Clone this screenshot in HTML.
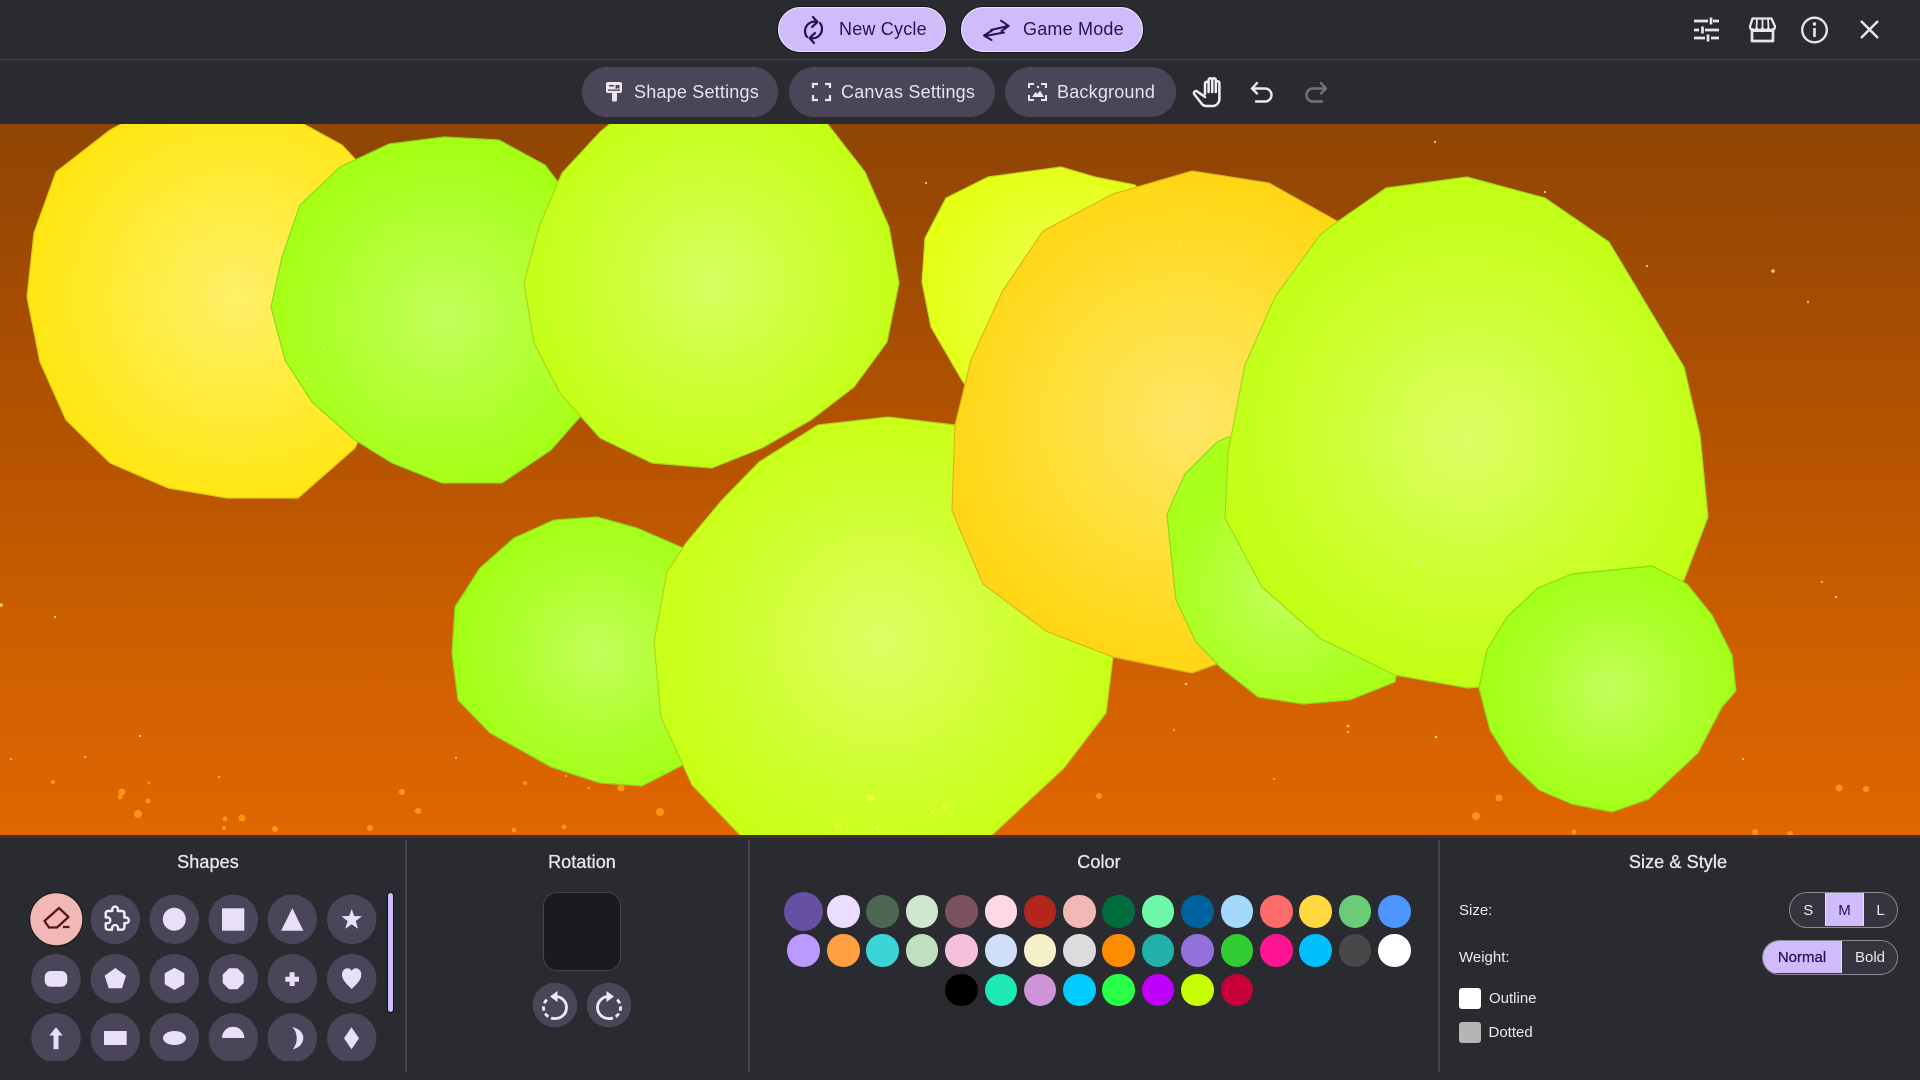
<!DOCTYPE html>
<html><head><meta charset="utf-8">
<style>
html,body{margin:0;padding:0;width:1920px;height:1080px;overflow:hidden;background:#2a2a31;font-family:"Liberation Sans",sans-serif;color:#e6e0e9}
.a{position:absolute}
.btn{position:absolute;box-sizing:border-box;border-radius:26px;font-size:18px;letter-spacing:.2px;white-space:nowrap}
.p{background:#d0bcfb;border:1.5px solid #ece4ff;box-shadow:0 0 0 1px #17161c;color:#25125e;top:7px;height:45px;line-height:43px}
.s{background:#4a4558;color:#e8e2ee;top:67px;height:50px;line-height:50px}
.t{position:absolute;font-size:18px;top:851px;height:22px;line-height:22px;text-align:center;color:#e8e4ec;transform:translateX(-50%);white-space:nowrap;letter-spacing:.1px;-webkit-text-stroke:.35px #e8e4ec}
.l{position:absolute;font-size:15px;line-height:18px;color:#ece8ef;white-space:nowrap}
.seg{position:absolute;box-sizing:border-box;font-size:15px;text-align:center;background:#36353d;color:#ece8ef}
svg{position:absolute;left:0;top:0;overflow:hidden}
</style></head>
<body>
<div class="a" style="left:0;top:59px;width:1920px;height:1px;background:#45444c"></div>

<div class="btn p" style="left:778px;width:168px;"><span class="a" style="left:60px">New Cycle</span></div>
<div class="btn p" style="left:961px;width:182px;"><span class="a" style="left:61px">Game Mode</span></div>

<div class="btn s" style="left:582px;width:196px;"><span class="a" style="left:52px">Shape Settings</span></div>
<div class="btn s" style="left:789px;width:206px;"><span class="a" style="left:52px">Canvas Settings</span></div>
<div class="btn s" style="left:1005px;width:171px;"><span class="a" style="left:52px">Background</span></div>

<div class="a" style="left:0;top:124px;width:1920px;height:711px;background:linear-gradient(180deg,#8f4504 0%,#a04b03 20%,#b95500 50%,#d06000 75%,#e06600 100%)"></div>
<svg class="a" style="left:0;top:124px" width="1920" height="711" viewBox="0 124 1920 711">
<defs>
<radialGradient id="y1" gradientUnits="userSpaceOnUse" cx="236" cy="297" r="210"><stop offset="0" stop-color="#fff068"/><stop offset=".55" stop-color="#ffeb38"/><stop offset="1" stop-color="#ffe612"/></radialGradient>
<radialGradient id="g1" gradientUnits="userSpaceOnUse" cx="444" cy="317" r="175"><stop offset="0" stop-color="#c2ff5c"/><stop offset=".55" stop-color="#b2ff33"/><stop offset="1" stop-color="#a5ff14"/></radialGradient>
<radialGradient id="l1" gradientUnits="userSpaceOnUse" cx="713" cy="283" r="195"><stop offset="0" stop-color="#d8ff62"/><stop offset=".55" stop-color="#ccff33"/><stop offset="1" stop-color="#c4ff14"/></radialGradient>
<radialGradient id="g2" gradientUnits="userSpaceOnUse" cx="597" cy="653" r="145"><stop offset="0" stop-color="#c2ff5c"/><stop offset=".6" stop-color="#aeff2c"/><stop offset="1" stop-color="#a2ff14"/></radialGradient>
<radialGradient id="l2" gradientUnits="userSpaceOnUse" cx="882" cy="640" r="235"><stop offset="0" stop-color="#deff66"/><stop offset=".55" stop-color="#d0ff33"/><stop offset="1" stop-color="#c8ff14"/></radialGradient>
<radialGradient id="l3" gradientUnits="userSpaceOnUse" cx="1061" cy="300" r="140"><stop offset="0" stop-color="#ecff55"/><stop offset="1" stop-color="#e4ff14"/></radialGradient>
<radialGradient id="y2" gradientUnits="userSpaceOnUse" cx="1187" cy="420" r="240"><stop offset="0" stop-color="#ffe668"/><stop offset=".55" stop-color="#ffdf38"/><stop offset="1" stop-color="#ffd716"/></radialGradient>
<radialGradient id="g3" gradientUnits="userSpaceOnUse" cx="1285" cy="590" r="120"><stop offset="0" stop-color="#c2ff5c"/><stop offset="1" stop-color="#a8ff18"/></radialGradient>
<radialGradient id="l4" gradientUnits="userSpaceOnUse" cx="1468" cy="437" r="250"><stop offset="0" stop-color="#dcff66"/><stop offset=".55" stop-color="#ceff33"/><stop offset="1" stop-color="#c2ff14"/></radialGradient>
<radialGradient id="g4" gradientUnits="userSpaceOnUse" cx="1612" cy="690" r="130"><stop offset="0" stop-color="#c2ff5c"/><stop offset=".6" stop-color="#aeff2c"/><stop offset="1" stop-color="#a2ff14"/></radialGradient>
</defs>
<g stroke-width="1.2" stroke-linejoin="round">
<polygon fill="url(#y1)" stroke="#e0ca10" points="125,122 300,122 342,145 358,162 420,300 355,448 298,498 227,498 168,488 110,463 66,420 40,362 27,297 34,233 56,172 110,130"/>
<polygon fill="url(#g1)" stroke="#8ed81a" points="444,137 499,140 545,165 558,182 600,290 580,417 551,450 502,483 442,483 392,463 355,440 312,402 285,360 271,307 282,257 300,205 340,167 389,144"/>
<polygon fill="url(#l1)" stroke="#a6d81a" points="612,122 826,122 865,172 889,227 899,283 887,342 854,387 811,420 762,448 712,468 652,463 600,438 560,393 534,343 524,283 539,227 562,173 600,132"/>
<polygon fill="url(#g2)" stroke="#8fd81a" points="554,520 597,517 637,528 683,548 720,650 683,765 642,786 600,783 551,767 490,733 458,700 452,653 455,607 480,568 514,538"/>
<polygon fill="url(#l2)" stroke="#aed81a" points="888,417 955,425 1060,480 1113,657 1106,713 1064,768 991,836 741,836 692,785 661,717 654,642 667,572 686,543 722,500 759,462 818,425"/>
<polygon fill="url(#l3)" stroke="#c2d81a" points="1061,167 1095,177 1135,185 1200,250 1200,400 1000,440 960,377 931,327 922,282 925,238 946,198 960,191 988,177"/>
<polygon fill="url(#y2)" stroke="#d8b81a" points="1192,171 1269,183 1337,221 1420,300 1450,500 1300,660 1217,664 1192,673 1113,657 1046,631 983,584 960,530 952,510 955,425 960,405 971,360 1002,292 1043,231 1113,194"/>
<polygon fill="url(#g3)" stroke="#8ed81a" points="1228,437 1217,442 1185,474 1173,500 1167,515 1176,600 1196,642 1220,667 1258,697 1303,704 1350,700 1395,682 1410,600 1350,480"/>
<polygon fill="url(#l4)" stroke="#a0d81a" points="1467,177 1386,188 1337,222 1320,235 1275,297 1245,365 1228,453 1225,518 1262,587 1321,639 1395,675 1468,688 1481,687 1600,650 1684,580 1708,517 1700,435 1684,367 1609,242 1545,198"/>
<polygon fill="url(#g4)" stroke="#8ed81a" points="1652,566 1572,574 1538,588 1507,617 1487,650 1479,688 1490,730 1510,762 1539,790 1572,804 1612,812 1649,799 1698,753 1722,707 1736,691 1732,655 1712,615 1687,584"/>
</g>
<g fill="#ff9416">
<circle cx="122" cy="792" r="3.5"/><circle cx="120" cy="797" r="2.5"/><circle cx="138" cy="814" r="4"/><circle cx="148" cy="801" r="2.5"/><circle cx="225" cy="819" r="2.5"/><circle cx="242" cy="818" r="3.5"/><circle cx="224" cy="828" r="2"/><circle cx="275" cy="829" r="3"/><circle cx="370" cy="828" r="3"/><circle cx="402" cy="792" r="3"/><circle cx="418" cy="811" r="3"/><circle cx="514" cy="830" r="2.5"/><circle cx="564" cy="827" r="2.5"/><circle cx="621" cy="788" r="3.5"/><circle cx="660" cy="812" r="4"/><circle cx="525" cy="783" r="2"/><circle cx="53" cy="782" r="2"/><circle cx="149" cy="783" r="1.5"/><circle cx="1099" cy="796" r="3"/><circle cx="1499" cy="798" r="3.5"/><circle cx="1476" cy="816" r="4"/><circle cx="1839" cy="788" r="3.5"/><circle cx="1866" cy="789" r="3"/><circle cx="1574" cy="832" r="2.5"/><circle cx="1755" cy="832" r="3"/><circle cx="1790" cy="834" r="3"/>
</g>
<g fill="#eeff3a">
<circle cx="870" cy="798" r="4"/><circle cx="838" cy="826" r="3"/><circle cx="945" cy="807" r="2.5"/><circle cx="933" cy="812" r="2.5"/><circle cx="877" cy="828" r="2"/>
</g>
<g fill="#ffdf9a" opacity=".85">
<circle cx="1" cy="605" r="1.8"/><circle cx="55" cy="617" r="1.1"/><circle cx="140" cy="736" r="1.1"/><circle cx="11" cy="759" r="1"/><circle cx="85" cy="757" r="1"/><circle cx="219" cy="777" r="1"/><circle cx="456" cy="758" r="1"/><circle cx="566" cy="776" r=".9"/><circle cx="589" cy="788" r=".9"/><circle cx="1186" cy="684" r="1.3"/><circle cx="1348" cy="726" r="1.3"/><circle cx="1348" cy="732" r="1.1"/><circle cx="1436" cy="737" r="1.3"/><circle cx="1174" cy="730" r=".9"/><circle cx="1743" cy="759" r="1.1"/><circle cx="1836" cy="597" r="1.1"/><circle cx="1822" cy="582" r="1"/><circle cx="1422" cy="560" r="1.3"/><circle cx="1709" cy="721" r="1.1"/><circle cx="1706" cy="714" r=".9"/><circle cx="1274" cy="779" r=".9"/><circle cx="1435" cy="142" r="1.1"/><circle cx="1545" cy="192" r="1.1"/><circle cx="1647" cy="266" r="1.1"/><circle cx="1773" cy="271" r="1.8"/><circle cx="1808" cy="302" r="1.1"/><circle cx="1583" cy="416" r="1.3"/><circle cx="1180" cy="246" r="1.1"/><circle cx="1106" cy="429" r="1.3"/><circle cx="1380" cy="202" r="1.1"/><circle cx="1420" cy="490" r=".9"/><circle cx="926" cy="183" r="1.1"/><circle cx="307" cy="378" r="1.6"/><circle cx="187" cy="196" r=".9"/><circle cx="127" cy="236" r=".9"/><circle cx="369" cy="307" r=".9"/><circle cx="324" cy="348" r="1"/><circle cx="594" cy="193" r=".9"/>
</g>
</svg>
<div class="a" style="left:0;top:835px;width:1920px;height:3px;background:#463228"></div>

<div class="a" style="left:405px;top:840px;width:1.5px;height:232px;background:#45434f"></div>
<div class="a" style="left:748px;top:840px;width:1.5px;height:232px;background:#45434f"></div>
<div class="a" style="left:1438px;top:840px;width:1.5px;height:232px;background:#45434f"></div>

<div class="t" style="left:208px">Shapes</div>
<div class="t" style="left:582px">Rotation</div>
<div class="t" style="left:1099px">Color</div>
<div class="t" style="left:1678px">Size &amp; Style</div>

<div class="a" style="left:543px;top:892px;width:76px;height:77px;background:#1c1a20;border:1.5px solid #45434f;border-radius:14px"></div>

<div class="a" style="left:387px;top:892px;width:7px;height:121px;background:#d0bcfb;border:1.5px solid #111016;box-sizing:border-box;border-radius:4px"></div>

<div id="colors">
<div class="a" style="left:784px;top:891.5px;width:39px;height:39px;border-radius:50%;background:#6750a4"></div>
<div class="a" style="left:827px;top:895px;width:32.5px;height:32.5px;border-radius:50%;background:#eaddff"></div>
<div class="a" style="left:866px;top:895px;width:32.5px;height:32.5px;border-radius:50%;background:#4f6650"></div>
<div class="a" style="left:905.5px;top:895px;width:32.5px;height:32.5px;border-radius:50%;background:#cfe6cf"></div>
<div class="a" style="left:945px;top:895px;width:32.5px;height:32.5px;border-radius:50%;background:#7d5260"></div>
<div class="a" style="left:984.5px;top:895px;width:32.5px;height:32.5px;border-radius:50%;background:#ffd8e4"></div>
<div class="a" style="left:1023.5px;top:895px;width:32.5px;height:32.5px;border-radius:50%;background:#b3261e"></div>
<div class="a" style="left:1063px;top:895px;width:32.5px;height:32.5px;border-radius:50%;background:#f2b8b5"></div>
<div class="a" style="left:1102px;top:895px;width:32.5px;height:32.5px;border-radius:50%;background:#006d3e"></div>
<div class="a" style="left:1141.5px;top:895px;width:32.5px;height:32.5px;border-radius:50%;background:#6ff7a9"></div>
<div class="a" style="left:1181px;top:895px;width:32.5px;height:32.5px;border-radius:50%;background:#00629d"></div>
<div class="a" style="left:1220.5px;top:895px;width:32.5px;height:32.5px;border-radius:50%;background:#a4d8ff"></div>
<div class="a" style="left:1260px;top:895px;width:32.5px;height:32.5px;border-radius:50%;background:#ff6b6b"></div>
<div class="a" style="left:1299px;top:895px;width:32.5px;height:32.5px;border-radius:50%;background:#ffd93d"></div>
<div class="a" style="left:1338.5px;top:895px;width:32.5px;height:32.5px;border-radius:50%;background:#6bcb77"></div>
<div class="a" style="left:1378px;top:895px;width:32.5px;height:32.5px;border-radius:50%;background:#4d96ff"></div>

<div class="a" style="left:787px;top:934px;width:32.5px;height:32.5px;border-radius:50%;background:#ba9aff"></div>
<div class="a" style="left:827px;top:934px;width:32.5px;height:32.5px;border-radius:50%;background:#ff9f40"></div>
<div class="a" style="left:866px;top:934px;width:32.5px;height:32.5px;border-radius:50%;background:#3bd5d8"></div>
<div class="a" style="left:905.5px;top:934px;width:32.5px;height:32.5px;border-radius:50%;background:#bfdfc0"></div>
<div class="a" style="left:945px;top:934px;width:32.5px;height:32.5px;border-radius:50%;background:#f4c0dd"></div>
<div class="a" style="left:984.5px;top:934px;width:32.5px;height:32.5px;border-radius:50%;background:#cfdffb"></div>
<div class="a" style="left:1023.5px;top:934px;width:32.5px;height:32.5px;border-radius:50%;background:#f6f0c8"></div>
<div class="a" style="left:1063px;top:934px;width:32.5px;height:32.5px;border-radius:50%;background:#dcdcdc"></div>
<div class="a" style="left:1102px;top:934px;width:32.5px;height:32.5px;border-radius:50%;background:#ff8c00"></div>
<div class="a" style="left:1141.5px;top:934px;width:32.5px;height:32.5px;border-radius:50%;background:#20b2aa"></div>
<div class="a" style="left:1181px;top:934px;width:32.5px;height:32.5px;border-radius:50%;background:#9370db"></div>
<div class="a" style="left:1220.5px;top:934px;width:32.5px;height:32.5px;border-radius:50%;background:#32cd32"></div>
<div class="a" style="left:1260px;top:934px;width:32.5px;height:32.5px;border-radius:50%;background:#ff1493"></div>
<div class="a" style="left:1299px;top:934px;width:32.5px;height:32.5px;border-radius:50%;background:#00bfff"></div>
<div class="a" style="left:1338.5px;top:934px;width:32.5px;height:32.5px;border-radius:50%;background:#484848"></div>
<div class="a" style="left:1378px;top:934px;width:32.5px;height:32.5px;border-radius:50%;background:#ffffff"></div>

<div class="a" style="left:945px;top:973.5px;width:32.5px;height:32.5px;border-radius:50%;background:#000000"></div>
<div class="a" style="left:984.5px;top:973.5px;width:32.5px;height:32.5px;border-radius:50%;background:#1de9b6"></div>
<div class="a" style="left:1023.5px;top:973.5px;width:32.5px;height:32.5px;border-radius:50%;background:#ce93d8"></div>
<div class="a" style="left:1063px;top:973.5px;width:32.5px;height:32.5px;border-radius:50%;background:#00ccff"></div>
<div class="a" style="left:1102px;top:973.5px;width:32.5px;height:32.5px;border-radius:50%;background:#29ff46"></div>
<div class="a" style="left:1141.5px;top:973.5px;width:32.5px;height:32.5px;border-radius:50%;background:#bf00ff"></div>
<div class="a" style="left:1181px;top:973.5px;width:32.5px;height:32.5px;border-radius:50%;background:#c6ff00"></div>
<div class="a" style="left:1220.5px;top:973.5px;width:32.5px;height:32.5px;border-radius:50%;background:#c70039"></div>
</div>

<div class="l" style="left:1459px;top:902px">Size:</div>
<div class="l" style="left:1459px;top:949px">Weight:</div>
<div class="l" style="left:1489px;top:990px">Outline</div>
<div class="l" style="left:1488.5px;top:1024px">Dotted</div>
<div class="a" style="left:1459px;top:988px;width:22px;height:21px;background:#fff;border-radius:3px"></div>
<div class="a" style="left:1459px;top:1022px;width:22px;height:21px;background:#b5b5b5;border-radius:3px"></div>

<div class="a" style="left:1789px;top:892px;width:109px;height:36px;box-sizing:border-box;border:1.5px solid #8c8a94;border-radius:18px;overflow:hidden;background:#36353d">
<div class="seg" style="left:1px;top:0;width:34.5px;height:33px;line-height:35px">S</div>
<div class="seg" style="left:35px;top:0;width:39px;height:33px;line-height:35px;background:#d0bcfb;color:#25125e;border-left:1px solid #e6e0f0;border-right:1px solid #e6e0f0">M</div>
<div class="seg" style="left:74px;top:0;width:33px;height:33px;line-height:35px">L</div>
</div>
<div class="a" style="left:1762px;top:940px;width:136px;height:35px;box-sizing:border-box;border:1.5px solid #8c8a94;border-radius:18px;overflow:hidden;background:#36353d">
<div class="seg" style="left:0;top:0;width:79px;height:32px;line-height:34px;background:#d0bcfb;color:#25125e;border-right:1px solid #e6e0f0;-webkit-text-stroke:.25px #25125e">Normal</div>
<div class="seg" style="left:80px;top:0;width:54px;height:32px;line-height:34px">Bold</div>
</div>

<svg width="1920" height="1080" viewBox="0 0 1920 1080" fill="none">
<defs><clipPath id="cl"><rect x="0" y="880" width="385" height="181"/></clipPath></defs>
<!-- header -->
<g stroke="#25125e" stroke-width="2.2" stroke-linecap="round" stroke-linejoin="round">
<path d="M817 22A9.500 9.500 0 0 0 807 37M813 17L817.500 22L812 27"/>
<path d="M810 38A9.500 9.500 0 0 0 820 23M815 33L809.500 38L814 43"/>
<path stroke-width="2" d="M991 30L1008 26M1001 20.700L1008.700 26L1001.500 31"/>
<path stroke-width="2" d="M1004 32.500L985 36M992 30.500L984 35.500L991.500 40"/>
</g>
<!-- toolbar btn icons -->
<path fill="#ece6f0" d="M606 84a2 2 0 0 1 2-2h12a2 2 0 0 1 2 2v7a2 2 0 0 1-2 2h-3v7a1.500 1.500 0 0 1-1.500 1.500h-2a1.500 1.500 0 0 1-1.500-1.500v-7h-4a2 2 0 0 1-2-2z"/>
<rect x="609" y="85" width="5" height="1.500" fill="#4a4558"/><rect x="615.500" y="85" width="4" height="3.500" fill="#4a4558"/><rect x="608" y="89.500" width="12" height="1.300" fill="#4a4558"/>
<path stroke="#ece6f0" stroke-width="2.200" d="M813 88V84H818M825 84H830V88M830 95V100H825M818 100H813V95"/>
<path stroke="#ece6f0" stroke-width="2" d="M1029 88V84H1034M1041 84H1046V88M1046 95V100H1041M1034 100H1029V95"/>
<path fill="#ece6f0" d="M1032 97L1035.500 92L1037.500 94L1040 90.500L1044 97z"/><circle cx="1038" cy="87" r="1.200" fill="#ece6f0"/>
<!-- hand -->
<g stroke="#f2eff4" stroke-width="2.500" stroke-linecap="round" stroke-linejoin="round">
<path d="M1205 94V83.500a1.800 1.800 0 0 1 3.600 0V92M1208.600 92V80a1.800 1.800 0 0 1 3.600 0V92M1212.200 92V80a1.800 1.800 0 0 1 3.600 0V92M1215.800 92V83a1.800 1.800 0 0 1 3.600 0V99a7 7 0 0 1-7 7H1206a6 6 0 0 1-4.500-2.500L1194.500 94.500a2 2 0 0 1 3-2.800L1205 97"/>
</g>
<path stroke="#eceaef" stroke-width="2.400" stroke-linecap="round" stroke-linejoin="round" d="M1257 83L1252 88.500L1257 93.500M1252.500 88.500H1265a6.500 6.500 0 0 1 0 13H1256"/>
<path stroke="#74737a" stroke-width="2.400" stroke-linecap="round" stroke-linejoin="round" d="M1321 83L1326 88.500L1321 93.500M1325.500 88.500H1313a6.500 6.500 0 0 0 0 13H1322"/>
<!-- right icons -->
<g stroke="#e8e4ec" stroke-width="2.700">
<path d="M1694 21H1708M1713 21H1719M1711 17.500V24.500"/>
<path d="M1694 30H1699M1705 30H1719M1702.500 26.500V33.500"/>
<path d="M1694 38H1705M1711 38H1719M1708 34.500V41.500"/>
<path stroke-linejoin="round" d="M1752 28V41H1773V28"/>
<path stroke-width="2.300" stroke-linejoin="round" d="M1752.500 18.500H1771.500L1775 26.500a3.500 3.500 0 0 1-6.500 2a3.800 3.800 0 0 1-6 0a3.800 3.800 0 0 1-6 0a3.500 3.500 0 0 1-6.500-2z"/>
<path stroke-width="1.800" d="M1757 19L1756.500 28M1762.500 19V28M1768 19L1768.500 28"/>
<path stroke-width="2" d="M1752 31H1773"/>
<circle stroke-width="2.400" cx="1814.500" cy="30" r="12.300"/>
<path stroke-width="2.600" d="M1814.500 28V37"/>
<path stroke-width="2.500" d="M1861 21L1878 38M1878 21L1861 38"/>
</g>
<circle cx="1814.500" cy="24" r="1.700" fill="#e8e4ec"/>

<!-- shape buttons -->
<g clip-path="url(#cl)">
<g fill="#4a4558">
<circle cx="115.300" cy="919.300" r="24.700"/><circle cx="174.300" cy="919.300" r="24.700"/><circle cx="233.300" cy="919.300" r="24.700"/><circle cx="292.300" cy="919.300" r="24.700"/><circle cx="351.700" cy="919.300" r="24.700"/>
<circle cx="56" cy="978.700" r="24.700"/><circle cx="115.300" cy="978.700" r="24.700"/><circle cx="174.300" cy="978.700" r="24.700"/><circle cx="233.300" cy="978.700" r="24.700"/><circle cx="292.300" cy="978.700" r="24.700"/><circle cx="351.700" cy="978.700" r="24.700"/>
<circle cx="56" cy="1038" r="24.700"/><circle cx="115.300" cy="1038" r="24.700"/><circle cx="174.300" cy="1038" r="24.700"/><circle cx="233.300" cy="1038" r="24.700"/><circle cx="292.300" cy="1038" r="24.700"/><circle cx="351.700" cy="1038" r="24.700"/>
</g>
<circle cx="56.300" cy="919.300" r="26.500" fill="#f2b8b5" stroke="#17151a" stroke-width="1"/>
<path stroke="#5c1612" stroke-width="2.300" stroke-linejoin="round" d="M44.500 921L59 908L68.500 917L57 927.500H49z"/>
<path stroke="#5c1612" stroke-width="2.200" d="M63 927H69.500"/>
<path stroke="#f2f0f6" stroke-width="2.200" stroke-linejoin="round" transform="translate(103.500 905.500) scale(1.100)" d="M20.500 11H19V7c0-1.100-.9-2-2-2h-4V3.500C13 2.120 11.880 1 10.500 1S8 2.120 8 3.500V5H4c-1.100 0-1.990.9-1.990 2v3.800H3.500c1.490 0 2.700 1.210 2.700 2.700s-1.210 2.700-2.700 2.700H2V20c0 1.100.9 2 2 2h3.800v-1.500c0-1.490 1.210-2.700 2.700-2.700 1.490 0 2.700 1.210 2.700 2.700V22H17c1.100 0 2-.9 2-2v-4h1.500c1.380 0 2.500-1.120 2.500-2.500S21.880 11 20.500 11z"/>
<g fill="#e8e0f8">
<circle cx="174.300" cy="919.300" r="11.500"/>
<rect x="222" y="908.300" width="22.300" height="22.400"/>
<polygon points="292.300,908.300 303.400,930.700 281.100,930.700"/>
<polygon points="351.700,909 354.200,916 362,916.300 355.800,921 358,928.700 351.700,924.200 345.300,928.700 347.600,921 341.300,916.300 349.100,916"/>
<rect x="44.700" y="971" width="22.600" height="15.700" rx="6"/>
<polygon points="115.300,968 126,975.700 122,988.300 108.700,988.300 104.700,975.700"/>
<polygon points="174.500,967.700 184.300,973.300 184.300,984.300 174.500,990 164.700,984.300 164.700,973.300"/>
<polygon points="229,968.300 237.500,968.300 243.700,974.500 243.700,983 237.500,989.300 229,989.300 222.700,983 222.700,974.500"/>
<path d="M289.600 972.300h5v4.500h4.400v5h-4.400v4.200h-5v-4.200h-4.300v-5h4.300z"/>
<path d="M351.700 989C346 983.500 342 979.500 342 974.500C342 970.500 345 968.300 347.500 968.300C349.500 968.300 351 969.500 351.700 971C352.400 969.500 353.900 968.300 355.900 968.300C358.400 968.300 361.300 970.500 361.300 974.500C361.300 979.500 357.400 983.500 351.700 989Z"/>
<path d="M56 1027.300L62.700 1035.500H58.500V1049.300H53.500V1035.500H49.300Z"/>
<rect x="104" y="1031" width="22.700" height="14"/>
<ellipse cx="174.500" cy="1038" rx="11.500" ry="7"/>
<path d="M222 1038a11.150 11.300 0 0 1 22.300 0z"/>
<path d="M292 1026.700C300 1029 303.300 1033 303.300 1038C303.300 1043.500 299 1048 292.800 1049.300C296 1045 297 1041 296.700 1037.500C296.400 1033 295 1029.500 292 1026.700Z"/>
<polygon points="351.500,1027.300 359,1038.300 351.500,1049.300 344,1038.300"/>
</g>
</g>

<!-- rotate -->
<circle cx="555" cy="1005" r="22.300" fill="#4a4558"/>
<circle cx="609" cy="1005" r="22.300" fill="#4a4558"/>
<g stroke="#efeaf6" stroke-width="2.800" stroke-linejoin="round">
<path d="M555.500 996.500A11 11 0 0 1 555.500 1018.500"/>
<path stroke-dasharray="4.500 3" d="M555.500 1018.500A11 11 0 0 1 549 998"/>
<path d="M608.500 996.500A11 11 0 0 0 608.500 1018.500"/>
<path stroke-dasharray="4.500 3" d="M608.500 1018.500A11 11 0 0 0 615 998"/>
</g>
<polygon fill="#efeaf6" points="557.500,991 550,996.500 557.500,1002"/>
<polygon fill="#efeaf6" points="606.500,991 614,996.500 606.500,1002"/>
</svg>
</body></html>
